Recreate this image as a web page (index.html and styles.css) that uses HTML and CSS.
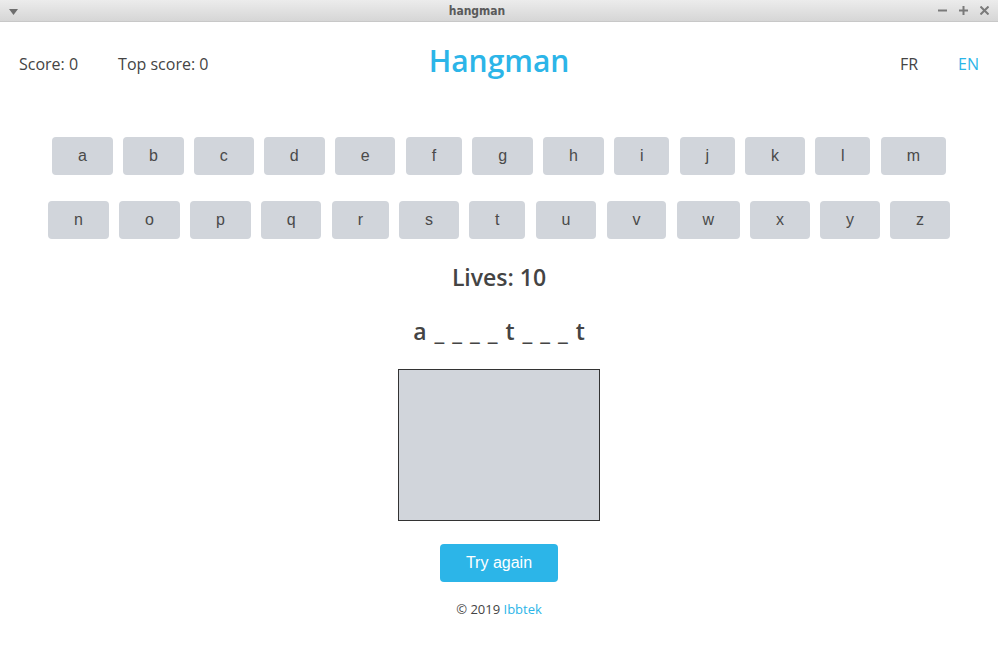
FILE: index.html
```html
<!DOCTYPE html>
<html lang="en">
<head>
<meta charset="utf-8">
<title>hangman</title>
<link rel="stylesheet" href="styles.css">
</head>
<body>
<div class="titlebar">
  <svg class="tb-menu" width="9" height="6" viewBox="0 0 9 6"><path d="M0 0 H9 L4.5 6 Z" fill="#6e6e6e"/></svg>
  <span class="tb-title">hangman</span>
  <div class="tb-controls">
    <svg width="9" height="9" viewBox="0 0 9 9"><path d="M0 4.5 H9" stroke="#7a7a7a" stroke-width="2"/></svg>
    <svg width="9" height="9" viewBox="0 0 9 9"><path d="M0 4.5 H9 M4.5 0 V9" stroke="#7a7a7a" stroke-width="2"/></svg>
    <svg width="9" height="9" viewBox="0 0 9 9"><path d="M0.5 0.5 L8.5 8.5 M8.5 0.5 L0.5 8.5" stroke="#7a7a7a" stroke-width="2"/></svg>
  </div>
</div>
<div class="app">
  <header class="header">
    <div class="scores">
      <span>Score: 0</span>
      <span>Top score: 0</span>
    </div>
    <h1 class="title">Hangman</h1>
    <div class="langs">
      <span class="lang">FR</span>
      <span class="lang active">EN</span>
    </div>
  </header>
  <div class="keyboard">
    <div class="krow">
      <button class="key">a</button><button class="key">b</button><button class="key">c</button><button class="key">d</button><button class="key">e</button><button class="key">f</button><button class="key">g</button><button class="key">h</button><button class="key">i</button><button class="key">j</button><button class="key">k</button><button class="key">l</button><button class="key">m</button>
    </div>
    <div class="krow">
      <button class="key">n</button><button class="key">o</button><button class="key">p</button><button class="key">q</button><button class="key">r</button><button class="key">s</button><button class="key">t</button><button class="key">u</button><button class="key">v</button><button class="key">w</button><button class="key">x</button><button class="key">y</button><button class="key">z</button>
    </div>
  </div>
  <div class="lives">Lives: 10</div>
  <div class="word">a _ _ _ _ t _ _ _ t</div>
  <div class="canvas"></div>
  <button class="retry">Try again</button>
  <footer class="footer">© 2019 <span class="brand">Ibbtek</span></footer>
</div>
</body>
</html>
```
FILE: styles.css
```css
html, body {
  margin: 0;
  padding: 0;
  background: #ffffff;
}
body {
  font-family: "Open Sans", "Noto Sans", sans-serif;
  color: #444444;
  width: 998px;
  height: 672px;
  overflow: hidden;
}
.titlebar {
  height: 22px;
  background: linear-gradient(#ececec, #d6d6d6);
  display: flex;
  align-items: center;
  justify-content: center;
  position: relative;
  border-bottom: 1px solid #c8c8c8;
  box-sizing: border-box;
}
.tb-menu {
  position: absolute;
  left: 9px;
  top: 9px;
}
.tb-title {
  font-family: "DejaVu Sans Condensed", "DejaVu Sans", sans-serif;
  font-stretch: condensed;
  font-weight: bold;
  font-size: 12px;
  color: #5a5a5a;
  margin-right: 44px;
}
.tb-controls {
  position: absolute;
  right: 9px;
  top: 6px;
  display: flex;
  gap: 12px;
}
.app {
  display: flex;
  flex-direction: column;
  align-items: center;
}
.header {
  width: 100%;
  height: 84px;
  display: grid;
  grid-template-columns: 1fr auto 1fr;
  align-items: center;
  box-sizing: border-box;
  padding: 0 19px;
}
.scores {
  display: flex;
  gap: 40px;
  font-size: 16px;
  color: #444444;
}
.title {
  margin: 0 0 8px 0;
  font-size: 30px;
  font-weight: 600;
  color: #2cb5e8;
}
.langs {
  justify-self: end;
  display: flex;
  gap: 40px;
  font-size: 16px;
}
.lang {
  color: #444444;
}
.lang.active {
  color: #2cb5e8;
}
.keyboard {
  margin-top: 31px;
  display: flex;
  flex-direction: column;
  align-items: center;
  gap: 26px;
}
.krow {
  display: flex;
  gap: 10.5px;
}
.key {
  font-family: "Liberation Sans", Arial, sans-serif;
  font-size: 16px;
  color: #4a4a4a;
  background: #d1d5db;
  border: none;
  border-radius: 4px;
  height: 38px;
  padding: 0 25.75px;
  line-height: 18px;
}
.lives {
  margin-top: 23px;
  font-size: 23px;
  font-weight: 600;
  color: #444444;
  line-height: 30px;
}
.word {
  margin-top: 24px;
  font-size: 23px;
  font-weight: 600;
  color: #444444;
  line-height: 30px;
  word-spacing: 2px;
}
.canvas {
  margin-top: 23px;
  width: 200px;
  height: 150px;
  background: #d1d5db;
  border: 1px solid #333333;
}
.retry {
  margin-top: 23px;
  width: 118px;
  height: 38px;
  background: #2cb5e8;
  color: #ffffff;
  border: none;
  border-radius: 4px;
  font-family: "Liberation Sans", Arial, sans-serif;
  font-size: 16px;
}
.footer {
  margin-top: 18px;
  font-size: 13px;
  color: #444444;
}
.brand {
  color: #2cb5e8;
}
```
